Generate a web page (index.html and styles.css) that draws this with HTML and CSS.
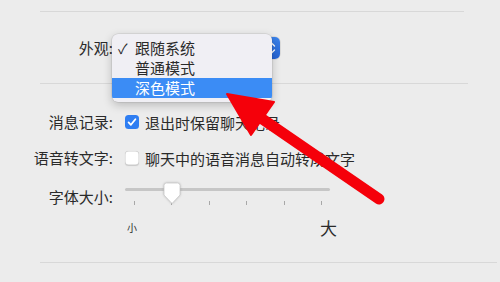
FILE: index.html
```html
<!doctype html>
<html lang="zh-CN">
<head>
    <meta charset="utf-8">
    <meta name="viewport" content="width=device-width, initial-scale=1">
    <title>通用设置</title>
    <link rel="stylesheet" href="styles.css">
</head>
<body>

<div class="prefs">
    <hr class="sep sep-top">

    <!-- Внешний вид: открытое выпадающее меню -->
    <section class="row row-appearance">
        <span class="label">外观:</span>
        <div class="popup">
            <span class="popup-value">跟随系统</span>
            <span class="popup-arrows">
                <svg width="9" height="14" viewBox="0 0 9 14"><path d="M1.5 5 4.5 2 7.5 5M1.5 9l3 3 3-3" fill="none" stroke="#fff" stroke-width="1.4" stroke-linecap="round" stroke-linejoin="round"/></svg>
            </span>
            <ul class="menu" role="listbox">
                <li class="menu-item is-checked" role="option" aria-selected="true">跟随系统</li>
                <li class="menu-item" role="option">普通模式</li>
                <li class="menu-item is-active" role="option">深色模式</li>
            </ul>
        </div>
    </section>

    <hr class="sep sep-mid">

    <section class="options">
        <div class="row row-check">
            <span class="label">消息记录:</span>
            <label class="check">
                <input type="checkbox" class="check-input" checked>
                <span class="check-box"></span>
                <span class="check-text">退出时保留聊天记录</span>
            </label>
        </div>

        <div class="row row-check">
            <span class="label">语音转文字:</span>
            <label class="check">
                <input type="checkbox" class="check-input">
                <span class="check-box"></span>
                <span class="check-text">聊天中的语音消息自动转成文字</span>
            </label>
        </div>

        <div class="row row-slider">
            <span class="label label-slider">字体大小:</span>
            <div class="slider">
                <div class="slider-rail">
                    <div class="slider-track"></div>
                    <div class="slider-ticks">
                        <i></i><i></i><i></i><i></i><i></i><i></i>
                    </div>
                    <svg class="slider-thumb" width="18" height="23" viewBox="0 0 18 23"><path d="M3.5 1h11a2.5 2.5 0 0 1 2.5 2.5v9.5l-8 8.5-8-8.5V3.5A2.5 2.5 0 0 1 3.5 1z" fill="#fff" stroke="#c9c9c9" stroke-width="0.8"/></svg>
                </div>
                <div class="slider-labels">
                    <span class="slider-min">小</span>
                    <span class="slider-max">大</span>
                </div>
            </div>
        </div>
    </section>

    <hr class="sep sep-bottom">
</div>

<!-- Красная стрелка-указатель поверх окна -->
<svg class="pointer-arrow" width="500" height="282" viewBox="0 0 500 282" aria-hidden="true">
    <line x1="379" y1="199" x2="258" y2="116" stroke="#f5000a" stroke-width="11" stroke-linecap="round"/>
    <polygon points="227,94 274,102 251,135" fill="#f5000a" stroke="#f5000a" stroke-width="2" stroke-linejoin="round"/>
</svg>

</body>
</html>
```

FILE: styles.css
```css
:root {
    --bg: #ececec;
    --sep: #d8d8d8;
    --text: #2a2a2a;
    --accent: #3b8cf5;
    --check: #2f7ef2;
}

body {
    margin: 0;
    position: relative;
    height: 282px;
    overflow: hidden;
    background: var(--bg);
    color: var(--text);
    font-family: "Noto Sans CJK SC", "Noto Sans", sans-serif;
    font-size: 15px;
}

.prefs {
    padding-top: 11px;
}

/* Разделители */
.sep {
    border: 0;
    height: 1px;
    margin: 0 0 0 40px;
    background: var(--sep);
}

.sep-top { width: 424px; }
.sep-mid { width: 428px; }
.sep-bottom { width: 457px; margin-top: 22px; }

.row {
    display: flex;
    align-items: center;
    height: 24px;
}

.label {
    width: 113px;
    flex-shrink: 0;
    text-align: right;
    line-height: 24px;
}

/* Строка "外观" */
.row-appearance {
    padding: 24px 0 23px;
}

.popup {
    position: relative;
    display: flex;
    align-items: center;
    width: 162px;
    height: 22px;
    margin-left: 5px;
    background: #fff;
    border-radius: 5px;
    box-shadow: 0 0 0 0.5px rgba(0, 0, 0, 0.15);
}

.popup-value {
    flex: 1;
    padding-left: 17px;
}

.popup-arrows {
    display: flex;
    align-items: center;
    justify-content: center;
    width: 17px;
    height: 100%;
    background: linear-gradient(#3b82ea, #2463d4);
    border-radius: 0 5px 5px 0;
}

.menu {
    position: absolute;
    left: -6px;
    top: -3px;
    width: 160px;
    margin: 0;
    padding: 4px 0;
    list-style: none;
    background: #f0eff4;
    border-radius: 6px;
    box-shadow: 0 0 0 0.5px rgba(0, 0, 0, 0.12), 0 3px 10px rgba(0, 0, 0, 0.22);
    overflow: hidden;
}

.menu-item {
    position: relative;
    height: 20px;
    line-height: 20px;
    padding-left: 23px;
}

.menu-item.is-checked::before {
    content: '✓';
    position: absolute;
    left: 6px;
    font-size: 14px;
}

.menu-item.is-active {
    background: var(--accent);
    color: #fff;
}

/* Чекбоксы */
.options {
    display: flex;
    flex-direction: column;
    gap: 12px;
    padding-top: 26px;
}

.check {
    display: flex;
    align-items: center;
    gap: 6px;
    margin-left: 12px;
}

.check-input {
    position: absolute;
    opacity: 0;
    z-index: -1;
}

.check-box {
    width: 14px;
    height: 14px;
    box-sizing: border-box;
    border-radius: 3.5px;
    background: #fff;
    box-shadow: inset 0 0 0 0.5px rgba(0, 0, 0, 0.2), 0 0.5px 1px rgba(0, 0, 0, 0.15);
}

.check-input:checked + .check-box {
    background-color: var(--check);
    box-shadow: none;
    background-image: url("data:image/svg+xml,%3csvg xmlns='http://www.w3.org/2000/svg' viewBox='0 0 14 14'%3e%3cpath fill='none' stroke='%23fff' stroke-linecap='round' stroke-linejoin='round' stroke-width='1.8' d='m3.6 7.4 2.3 2.4 4.5-5.6'/%3e%3c/svg%3e");
}

/* Слайдер размера шрифта */
.row-slider {
    height: auto;
    align-items: flex-start;
    margin-top: 1px;
}

.label-slider {
    line-height: 20px;
    margin-top: 4px;
}

.slider {
    width: 205px;
    margin-left: 12px;
}

.slider-rail {
    position: relative;
    height: 24px;
}

.slider-track {
    position: absolute;
    left: 0;
    right: 0;
    top: 5px;
    height: 3px;
    border-radius: 2px;
    background: #c6c6c6;
}

.slider-ticks {
    position: absolute;
    left: 9px;
    right: 8px;
    top: 18px;
    display: flex;
    justify-content: space-between;
}

.slider-ticks i {
    width: 1px;
    height: 4px;
    background: #a8a8a8;
}

.slider-thumb {
    position: absolute;
    left: 38px;
    top: -1px;
    filter: drop-shadow(0 0.5px 1px rgba(0, 0, 0, 0.2));
}

.slider-labels {
    display: flex;
    align-items: center;
    justify-content: space-between;
    height: 26px;
    margin-top: 7px;
    margin-right: -7px;
}

.slider-min {
    font-size: 10px;
    margin-left: 2px;
}

.slider-max {
    font-size: 17px;
}

.pointer-arrow {
    position: absolute;
    left: 0;
    top: 0;
    pointer-events: none;
}
```
